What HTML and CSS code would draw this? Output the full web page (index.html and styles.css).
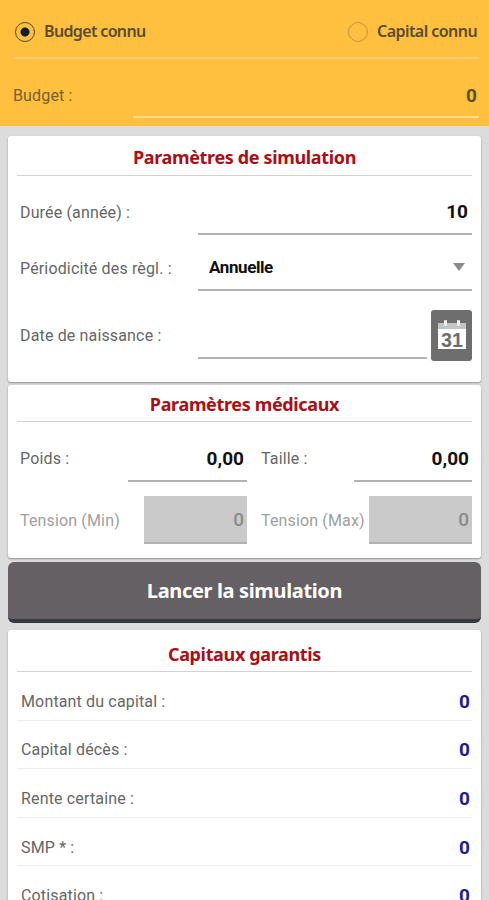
FILE: index.html
```
<!DOCTYPE html>
<html lang="fr">
<head>
  <meta charset="UTF-8">
  <meta name="viewport" content="width=device-width, initial-scale=1.0">
  <title>Simulation</title>
  <link rel="stylesheet" href="styles.css">
</head>
<body>

  <!-- Budget / Capital -->
  <header class="top">
    <div class="choices">
      <label class="choice"><input type="radio" name="mode" checked /><span class="budget-text">Budget connu</span></label>
      <label class="choice"><input type="radio" name="mode" /><span class="capital-text">Capital connu</span></label>
    </div>
    <div class="budget-row">
      <label for="budget" class="label label-budget">Budget :</label>
      <input type="text" id="budget" class="field" value="0" />
    </div>
  </header>

  <main>
    <!-- Simulation -->
    <section class="card card-simulation">
      <h2>Paramètres de simulation</h2>
      <div class="row row-duree">
        <label for="duree" class="label">Durée (année) :</label>
        <input type="text" id="duree" class="field" value="10" />
      </div>
      <div class="row row-periode">
        <span class="label">Périodicité des règl. :</span>
        <div class="select"><span>Annuelle</span><i class="arrow"></i></div>
      </div>
      <div class="row row-date">
        <label for="date" class="label">Date de naissance :</label>
        <input type="text" id="date" class="field" />
        <button class="calendar">
          <svg width="28" height="30" viewBox="0 0 28 30">
            <rect x="0" y="3" width="28" height="26" fill="#fff"/>
            <rect x="0" y="3" width="28" height="6" fill="#c4c4c4"/>
            <rect x="6" y="0" width="3" height="6" rx="1" fill="#eee"/>
            <rect x="19" y="0" width="3" height="6" rx="1" fill="#eee"/>
            <text x="14" y="26.5" text-anchor="middle" textLength="22" lengthAdjust="spacingAndGlyphs" class="day">31</text>
          </svg>
        </button>
      </div>
    </section>

    <!-- Medical -->
    <section class="card card-medical">
      <h2>Paramètres médicaux</h2>
      <div class="pair">
        <label for="poids" class="label">Poids :</label>
        <input type="text" id="poids" class="field" value="0,00" />
        <label for="taille" class="label label-right">Taille :</label>
        <input type="text" id="taille" class="field" value="0,00" />
      </div>
      <div class="pair pair-tension">
        <label for="tmin" class="label">Tension (Min)</label>
        <input type="text" id="tmin" class="field" value="0" disabled />
        <label for="tmax" class="label label-right">Tension (Max)</label>
        <input type="text" id="tmax" class="field" value="0" disabled />
      </div>
    </section>

    <button class="launch">Lancer la simulation</button>

    <!-- Results -->
    <section class="card card-results">
      <h2>Capitaux garantis</h2>
      <ul>
        <li><span class="label">Montant du capital :</span><b>0</b></li>
        <li><span class="label">Capital décès :</span><b>0</b></li>
        <li><span class="label">Rente certaine :</span><b>0</b></li>
        <li><span class="label">SMP * :</span><b>0</b></li>
        <li><span class="label">Cotisation :</span><b>0</b></li>
      </ul>
    </section>
  </main>

</body>
</html>
```
FILE: styles.css
```
* {
  margin: 0;
  padding: 0;
  box-sizing: border-box;
}
body {
  font-family: Roboto, sans-serif;
  font-size: 16px;
  color: #666;
  background-color: #dcdcdd;
  height: 900px;
  overflow: hidden;
}
.top {
  height: 126px;
  padding: 0 10px 0 13px;
  background-color: #ffc03f;
}
.choices {
  display: flex;
  justify-content: space-between;
  height: 59px;
  padding: 5px 1px 0 2px;
  border-bottom: 2px solid #ffcd70;
}
.choice {
  display: flex;
  align-items: center;
  gap: 9px;
  height: 52px;
  font-family: "Noto Sans", sans-serif;
  font-size: 16px;
  font-weight: 600;
  color: #594d31;
}
.choice input {
  appearance: none;
  width: 20px;
  height: 20px;
  margin-top: 2px;
  border: 1px solid #c8924b;
  border-radius: 50%;
}
.choice input:checked {
  border-color: #57482a;
  background: radial-gradient(circle, #10202a 4px, transparent 5px);
}
.choice span {
  white-space: nowrap;
}
.budget-text {
  width: 103px;
  letter-spacing: -0.65px;
}
.capital-text {
  width: 101px;
  letter-spacing: -0.55px;
}
.budget-row {
  display: flex;
  height: 59px;
}
.budget-row .field {
  flex: 1;
  padding: 16px 2px 0 0;
  color: #5a512a;
  border-bottom: 2px solid #ffd98c;
}
.label {
  white-space: nowrap;
  letter-spacing: 0.15px;
}
.label-budget {
  width: 120px;
  padding-top: 27px;
  color: #76602f;
}
main {
  padding: 10px 8px 0;
}
.card {
  background-color: #fff;
  border-radius: 3px;
  box-shadow: 0 1px 2px rgba(0, 0, 0, 0.35);
  padding: 0 9px;
}
.card h2 {
  font-family: "Noto Sans", sans-serif;
  font-size: 18px;
  font-weight: 700;
  letter-spacing: -0.35px;
  color: #ad0d12;
  text-align: center;
  border-bottom: 1px solid #d2d2d2;
  white-space: nowrap;
}
.field {
  min-width: 0;
  background: none;
  border: none;
  border-bottom: 2px solid #b2b2b2;
  font-family: Roboto, sans-serif;
  font-size: 19px;
  font-weight: 700;
  color: #111;
  text-align: right;
}
.card-simulation {
  height: 246px;
}
.card-simulation h2 {
  height: 40px;
  line-height: 42px;
}
.row {
  display: flex;
  align-items: center;
  height: 56px;
  padding-left: 3px;
}
.row .label {
  width: 178px;
}
.row .field, .select {
  flex: 1;
  height: 46px;
  padding: 0 4px 0 11px;
}
.row-duree {
  height: 72px;
}
.row-periode {
  margin-top: -8px;
}
.select {
  display: flex;
  justify-content: space-between;
  align-items: center;
  border-bottom: 2px solid #b2b2b2;
  font-size: 17px;
  font-weight: 700;
  letter-spacing: -0.4px;
  color: #111;
}
.arrow {
  margin-right: 3px;
  border: 6px solid transparent;
  border-top: 8px solid #8b8b8b;
  border-bottom: none;
}
.row-date {
  height: 52px;
  margin-top: 13px;
}
.row-date .field {
  height: 48px;
}
.calendar {
  display: flex;
  align-items: center;
  justify-content: center;
  width: 41px;
  height: 51px;
  margin-left: 4px;
  border: none;
  border-radius: 3px;
  background-color: #6e6e6e;
}
.day {
  font-family: "Liberation Sans", sans-serif;
  font-size: 21px;
  font-weight: 700;
  fill: #6c6c6c;
}
.card-medical {
  height: 173px;
  margin-top: 3px;
}
.card-medical h2 {
  height: 37px;
  line-height: 39px;
}
.pair {
  display: grid;
  grid-template-columns: 108px 119px 107px 118px;
  height: 60px;
  padding: 14px 0 0 3px;
}
.pair .label {
  line-height: 46px;
}
.pair .label-right {
  padding-left: 14px;
}
.pair .field {
  height: 46px;
  padding-right: 3px;
}
.pair-tension {
  grid-template-columns: 124px 103px 122px 103px;
}
.pair-tension .label {
  line-height: 50px;
  color: #a0a0a0;
}
.pair-tension .field {
  height: 48px;
  background-color: #cacaca;
  color: #8b8b8b;
  font-weight: 500;
}
.launch {
  display: block;
  width: 100%;
  height: 61px;
  margin: 4px 0 7px;
  border: none;
  border-bottom: 4px solid #343a40;
  border-radius: 6px;
  background-color: #656063;
  font-family: "Noto Sans", sans-serif;
  font-size: 20px;
  font-weight: 700;
  letter-spacing: -0.35px;
  color: #fff;
}
.card-results {
  height: 290px;
}
.card-results h2 {
  height: 42px;
  line-height: 48px;
}
ul {
  list-style-type: none;
}
li {
  display: flex;
  justify-content: space-between;
  align-items: center;
  height: 48.6px;
  padding: 11px 2px 0 4px;
  border-bottom: 1px solid #ececec;
}
li b {
  font-size: 19px;
  color: #201a9c;
}
```
